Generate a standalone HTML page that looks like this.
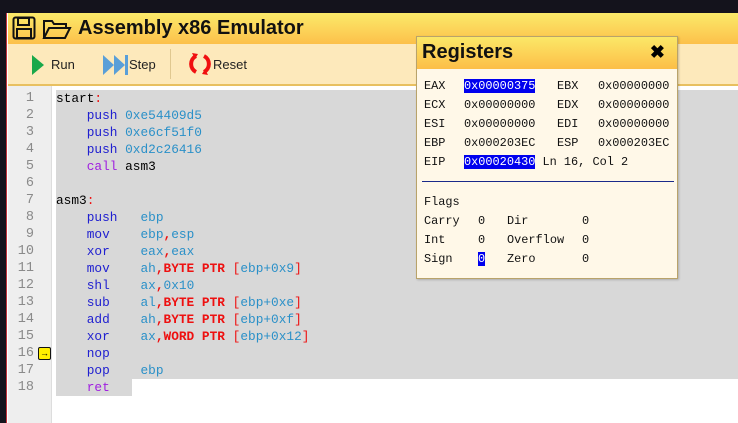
<!DOCTYPE html>
<html><head><style>
*{margin:0;padding:0;box-sizing:border-box}
html,body{width:738px;height:423px;overflow:hidden}
body{background:#fff;font-family:"Liberation Sans",sans-serif;position:relative}
#top{position:absolute;left:0;top:0;width:738px;height:13px;background:#14131c}
#lstrip{position:absolute;left:0;top:13px;width:7px;height:410px;background:#14131c;border-right:1px solid #c0303a}
#title{position:absolute;left:8px;top:13px;width:730px;height:31px;background:linear-gradient(#fbea6a,#fcc04a)}
#title .t{position:absolute;left:70px;top:4px;font-size:20px;font-weight:bold;color:#111}
#tb{position:absolute;left:8px;top:44px;width:730px;height:42px;background:#fde9bb;border-bottom:2px solid #e8c060}
.btn{position:absolute;top:13px;font-size:13px;color:#222}
#gut{position:absolute;left:8px;top:86px;width:44px;height:337px;background:#eeeeee;border-right:1px solid #ddd}
.ln{position:absolute;right:17px;font-family:"Liberation Mono",monospace;font-size:13.5px;color:#8a8a8a;text-align:right}
#code{position:absolute;left:56px;top:90px;font-family:"Liberation Mono",monospace;font-size:12.8px;line-height:17px}
.l{height:17px;background:#d8d8d8;width:682px;white-space:pre}
.k{color:#2020d0}.c{color:#a020e0}.n{color:#2a90c8}.r{color:#ee1010}.b{color:#ee1010;font-weight:bold}
#reg{position:absolute;left:416px;top:36px;width:262px;height:243px;background:#fff8e8;border:1px solid #b9a36a;box-shadow:1px 1px 2px rgba(0,0,0,.2)}
#reg .h{height:32px;background:linear-gradient(#fbe868,#fcbe48);position:relative}
#reg .h span{position:absolute;left:5px;top:4px;font-size:20px;font-weight:bold;color:#111}
#reg .x{position:absolute;right:12px;top:5px;font-size:18px;font-weight:bold}
.m{position:absolute;font-family:"Liberation Mono",monospace;font-size:11.9px;color:#111;white-space:pre}
.hl{background:#0000ee;color:#fff}
</style></head><body>
<div id="top"></div><div id="lstrip"></div>
<div id="title">
<svg style="position:absolute;left:4px;top:3px" width="24" height="24" viewBox="0 0 24 24"><rect x="1.5" y="1.5" width="21" height="21" rx="2" fill="none" stroke="#111" stroke-width="2"/><rect x="6" y="2" width="11" height="7" fill="none" stroke="#111" stroke-width="2"/><rect x="5" y="13" width="14" height="9" fill="none" stroke="#111" stroke-width="2"/></svg>
<svg style="position:absolute;left:34px;top:5px" width="30" height="22" viewBox="0 0 30 22"><path d="M2 20V3h8l2 3h12v4" fill="none" stroke="#111" stroke-width="2"/><path d="M2 20l5-10h21l-5 10z" fill="none" stroke="#111" stroke-width="2"/></svg>
<span class="t">Assembly x86 Emulator</span></div>
<div id="tb">
<svg style="position:absolute;left:24px;top:11px" width="12" height="20"><path d="M0 0L12 10L0 20z" fill="#1aa84a"/></svg>
<span class="btn" style="left:43px">Run</span>
<svg style="position:absolute;left:95px;top:11px" width="26" height="20"><path d="M0 0L11 10L0 20zM11 0L22 10L11 20z" fill="#5a9fd8"/><rect x="22" y="0" width="3" height="20" fill="#5a9fd8"/></svg>
<span class="btn" style="left:121px">Step</span>
<div style="position:absolute;left:162px;top:5px;width:1px;height:30px;background:#e0c890"></div>
<svg style="position:absolute;left:180px;top:8px" width="24" height="24" viewBox="0 0 24 24"><path d="M8 4A9 9 0 0 0 8 20" fill="none" stroke="#f01010" stroke-width="4"/><path d="M16 4A9 9 0 0 1 16 20" fill="none" stroke="#f01010" stroke-width="4"/><path d="M4 1l6 1-3 5z" fill="#f01010"/><path d="M20 23l-6-1 3-5z" fill="#f01010"/></svg>
<span class="btn" style="left:205px">Reset</span>
</div>
<div id="gut">
<div class="ln" style="top:5px">1</div><div class="ln" style="top:22px">2</div><div class="ln" style="top:39px">3</div><div class="ln" style="top:56px">4</div><div class="ln" style="top:73px">5</div><div class="ln" style="top:90px">6</div><div class="ln" style="top:107px">7</div><div class="ln" style="top:124px">8</div><div class="ln" style="top:141px">9</div><div class="ln" style="top:158px">10</div><div class="ln" style="top:175px">11</div><div class="ln" style="top:192px">12</div><div class="ln" style="top:209px">13</div><div class="ln" style="top:226px">14</div><div class="ln" style="top:243px">15</div><div class="ln" style="top:260px">16</div><div class="ln" style="top:277px">17</div><div class="ln" style="top:294px">18</div>
<div style="position:absolute;left:30px;top:261px;width:13px;height:13px;background:#ffee00;border:1px solid #111;border-radius:2px;font-size:9px;line-height:11px;text-align:center">→</div>
</div>
<div id="code"><div class="l">start<span class="r">:</span></div><div class="l">    <span class="k">push</span> <span class="n">0xe54409d5</span></div><div class="l">    <span class="k">push</span> <span class="n">0xe6cf51f0</span></div><div class="l">    <span class="k">push</span> <span class="n">0xd2c26416</span></div><div class="l">    <span class="c">call</span> asm3</div><div class="l"> </div><div class="l">asm3<span class="r">:</span></div><div class="l">    <span class="k">push</span>   <span class="n">ebp</span></div><div class="l">    <span class="k">mov</span>    <span class="n">ebp</span><span class="b">,</span><span class="n">esp</span></div><div class="l">    <span class="k">xor</span>    <span class="n">eax</span><span class="b">,</span><span class="n">eax</span></div><div class="l">    <span class="k">mov</span>    <span class="n">ah</span><span class="b">,BYTE PTR</span> <span class="r">[</span><span class="n">ebp+0x9</span><span class="r">]</span></div><div class="l">    <span class="k">shl</span>    <span class="n">ax</span><span class="b">,</span><span class="n">0x10</span></div><div class="l">    <span class="k">sub</span>    <span class="n">al</span><span class="b">,BYTE PTR</span> <span class="r">[</span><span class="n">ebp+0xe</span><span class="r">]</span></div><div class="l">    <span class="k">add</span>    <span class="n">ah</span><span class="b">,BYTE PTR</span> <span class="r">[</span><span class="n">ebp+0xf</span><span class="r">]</span></div><div class="l">    <span class="k">xor</span>    <span class="n">ax</span><span class="b">,WORD PTR</span> <span class="r">[</span><span class="n">ebp+0x12</span><span class="r">]</span></div><div class="l">    <span class="k">nop</span></div><div class="l">    <span class="k">pop</span>    <span class="n">ebp</span></div><div class="l" style="width:76px">    <span class="c">ret</span></div></div>
<div id="reg">
<div class="h"><span>Registers</span><b class="x">✖</b></div>
<div class="m" style="left:7px;top:42px">EAX</div><div class="m" style="left:47px;top:42px"><span class="hl">0x00000375</span></div><div class="m" style="left:140px;top:42px">EBX</div><div class="m" style="left:181px;top:42px">0x00000000</div>
<div class="m" style="left:7px;top:61px">ECX</div><div class="m" style="left:47px;top:61px">0x00000000</div><div class="m" style="left:140px;top:61px">EDX</div><div class="m" style="left:181px;top:61px">0x00000000</div>
<div class="m" style="left:7px;top:80px">ESI</div><div class="m" style="left:47px;top:80px">0x00000000</div><div class="m" style="left:140px;top:80px">EDI</div><div class="m" style="left:181px;top:80px">0x00000000</div>
<div class="m" style="left:7px;top:99px">EBP</div><div class="m" style="left:47px;top:99px">0x000203EC</div><div class="m" style="left:140px;top:99px">ESP</div><div class="m" style="left:181px;top:99px">0x000203EC</div>
<div class="m" style="left:7px;top:118px">EIP</div><div class="m" style="left:47px;top:118px"><span class="hl">0x00020430</span> Ln 16, Col 2</div>
<div style="position:absolute;left:5px;top:144px;width:252px;height:1px;background:#1a2a8a"></div>
<div class="m" style="left:7px;top:158px">Flags</div>
<div class="m" style="left:7px;top:177px">Carry</div><div class="m" style="left:61px;top:177px">0</div><div class="m" style="left:90px;top:177px">Dir</div><div class="m" style="left:165px;top:177px">0</div>
<div class="m" style="left:7px;top:196px">Int</div><div class="m" style="left:61px;top:196px">0</div><div class="m" style="left:90px;top:196px">Overflow</div><div class="m" style="left:165px;top:196px">0</div>
<div class="m" style="left:7px;top:215px">Sign</div><div class="m" style="left:61px;top:215px"><span class="hl">0</span></div><div class="m" style="left:90px;top:215px">Zero</div><div class="m" style="left:165px;top:215px">0</div>
</div>
</body></html>
